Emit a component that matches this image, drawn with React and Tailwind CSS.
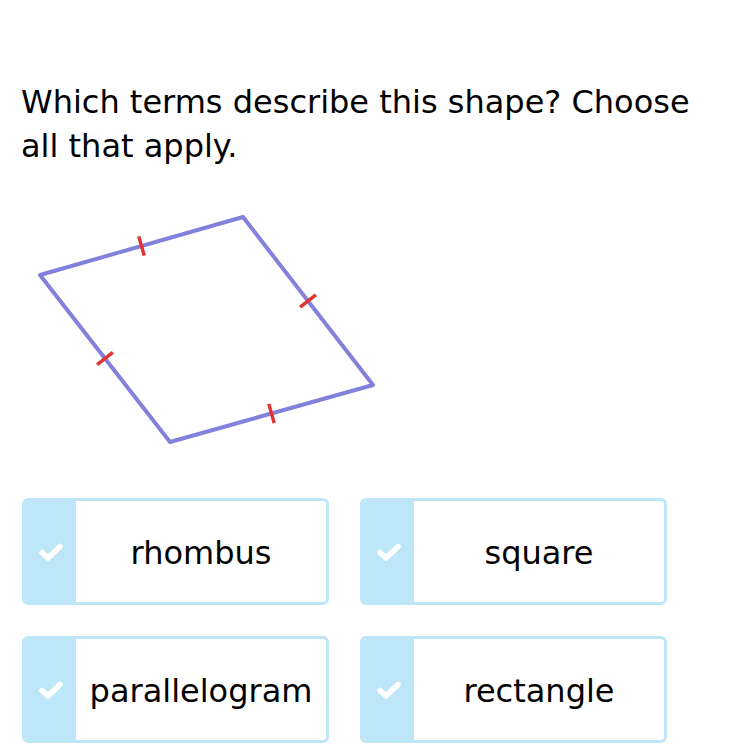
import React from 'react';

const Check = () => (
    <svg width="26" height="20" viewBox="0 0 26 20">
        <path d="M4 10.5 L10 16 L22 4.5" fill="none" stroke="#ffffff" strokeWidth="5.5" strokeLinecap="round" strokeLinejoin="round" />
    </svg>
);

const Choice = ({ label }) => (
    <button className="flex h-[107px] w-[307px] overflow-hidden rounded-md border-[3px] border-[#bde6f8] bg-white p-0 text-left">
        <span className="flex h-full w-[51px] items-center justify-center bg-[#bde6f8]">
            <Check />
        </span>
        <span className="flex flex-1 items-center justify-center pt-[2px] text-[32px] text-black">{label}</span>
    </button>
);

// tick mark across the middle of an edge
const Tick = ({ a, b }) => {
    const mx = (a[0] + b[0]) / 2;
    const my = (a[1] + b[1]) / 2;
    const dx = b[0] - a[0];
    const dy = b[1] - a[1];
    const len = Math.hypot(dx, dy);
    const nx = (-dy / len) * 10;
    const ny = (dx / len) * 10;
    return <line x1={mx - nx} y1={my - ny} x2={mx + nx} y2={my + ny} stroke="#e03434" strokeWidth="3.5" />;
};

const App = () => {
    const pts = [[40, 75], [243, 17], [373, 185], [170, 242]];
    const poly = pts.map((p) => p.join(',')).join(' ');

    return (
        <div className="min-h-[750px] w-[750px] bg-white font-['DejaVu_Sans',sans-serif]">
            <div className="px-[21px] pt-[80px]">
                <h1 className="text-[32px] leading-[44px] font-normal text-black">
                    Which terms describe this shape? Choose all that apply.
                </h1>
            </div>

            <svg width="400" height="260" viewBox="0 0 400 260" className="mt-[32px] block">
                <polygon points={poly} fill="none" stroke="#8282dc" strokeWidth="4" strokeLinejoin="round" />
                {pts.map((p, i) => (
                    <Tick key={i} a={p} b={pts[(i + 1) % 4]} />
                ))}
            </svg>

            <div className="mt-[38px] grid w-max grid-cols-2 gap-x-[31px] gap-y-[31px] pl-[22px]">
                <Choice label="rhombus" />
                <Choice label="square" />
                <Choice label="parallelogram" />
                <Choice label="rectangle" />
            </div>
        </div>
    );
};

export default App;
